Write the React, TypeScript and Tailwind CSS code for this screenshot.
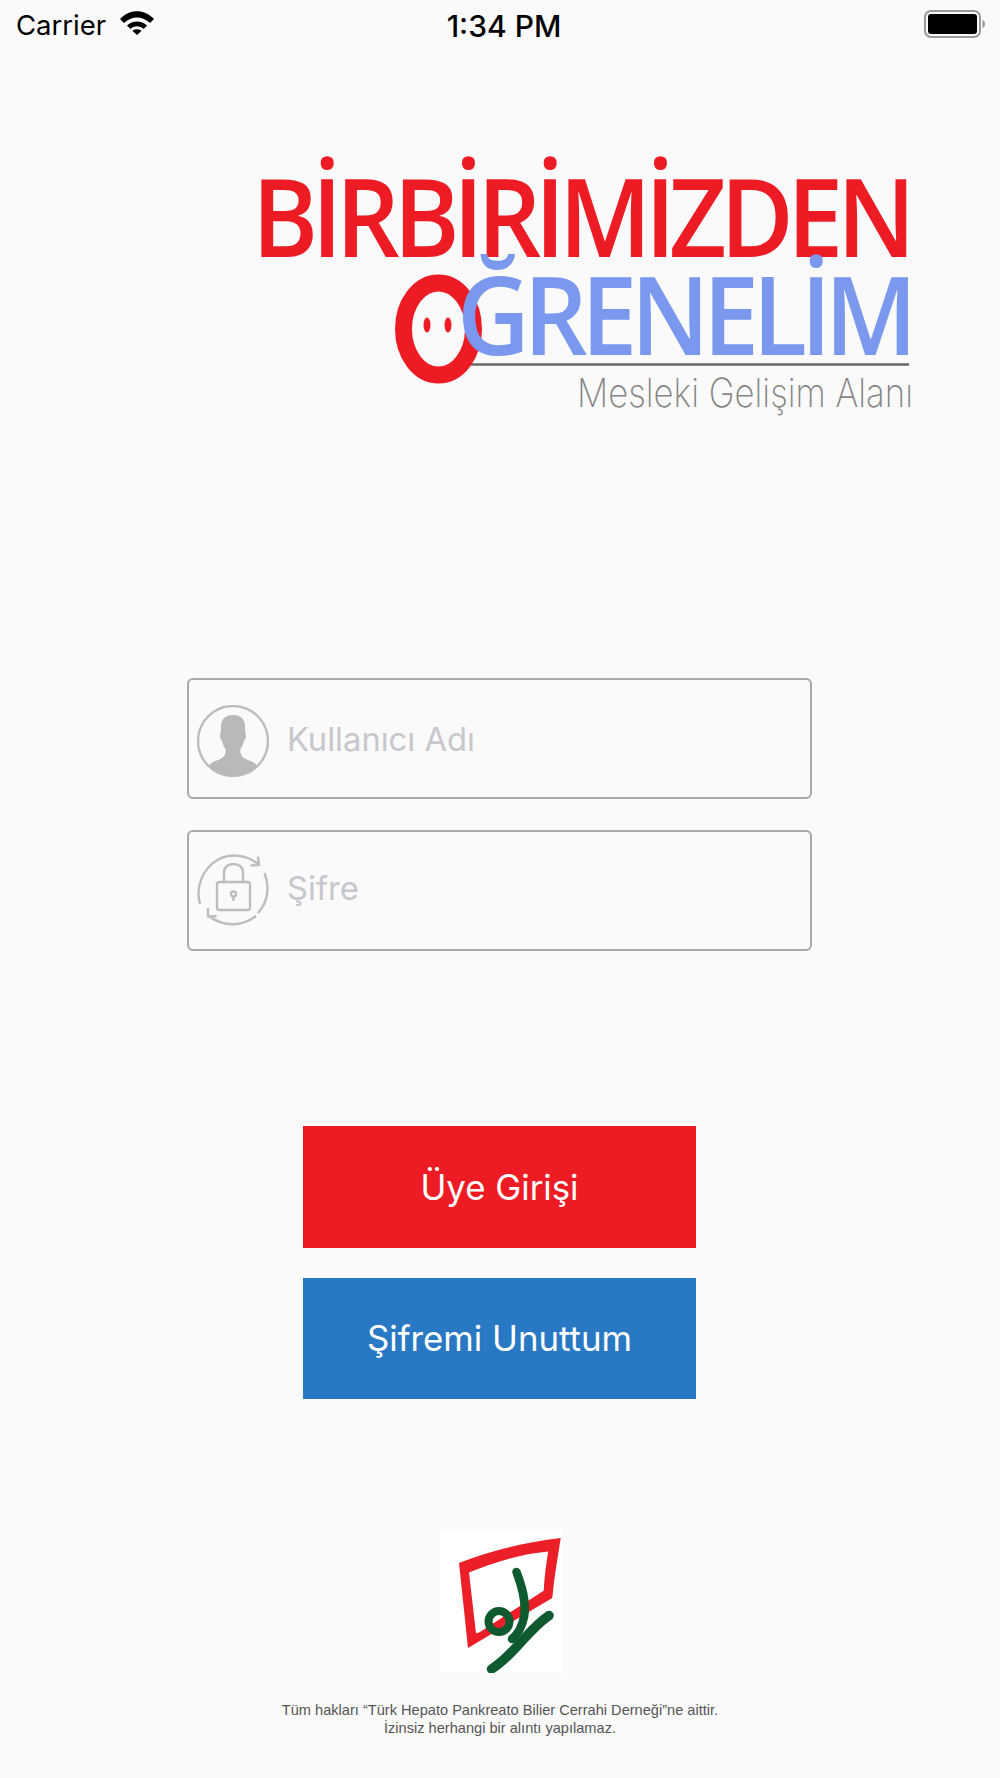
import React from 'react';

function WifiIcon() {
  return (
    <svg width="34" height="24" viewBox="0 0 34 24" className="mb-[6px] ml-[14px]">
      <path d="M0 8C9.5 -2.5 24.5 -2.5 34 8L30 12C22.5 4.5 11.5 4.5 4 12Z" fill="#000" />
      <path d="M7 14.6C12.6 9.2 21.4 9.2 27 14.6L23.6 18C19.6 14.4 14.4 14.4 10.4 18Z" fill="#000" />
      <path d="M12.4 19.8C15 17.8 19 17.8 21.6 19.8L17 24Z" fill="#000" />
    </svg>
  );
}

function BatteryIcon() {
  return (
    <svg width="61" height="28" viewBox="0 0 61 28">
      <rect x="1" y="1" width="55" height="26" rx="6" fill="none" stroke="#9a9a9a" strokeWidth="2" />
      <rect x="4" y="4" width="49" height="20" rx="3" fill="#000" />
      <path d="M58.5 10C60 10.5 61 12 61 14C61 16 60 17.5 58.5 18Z" fill="#9a9a9a" />
    </svg>
  );
}

function StatusBar() {
  return (
    <div className="relative flex h-[50px] items-center pl-[16px] pr-[15px] pt-[1px] font-['Inter',sans-serif] text-[27.5px] text-black">
      <span className="mt-[1px]">Carrier</span>
      <WifiIcon />
      <span className="absolute left-0 right-0 mt-[1px] pl-[8px] text-center text-[30px] font-medium">1:34 PM</span>
      <div className="mb-[4px] ml-auto">
        <BatteryIcon />
      </div>
    </div>
  );
}

function Logo() {
  return (
    <svg width="690" height="310" viewBox="250 130 690 310" className="ml-[250px] mt-[80px] shrink-0">
      <text
        x="252"
        y="257"
        textLength="657"
        lengthAdjust="spacingAndGlyphs"
        letterSpacing="-7"
        fontFamily="'Open Sans', sans-serif"
        fontWeight="600"
        fontSize="108"
        fill="#ed1c24"
      >
        BİRBİRİMİZDEN
      </text>
      <line x1="470" y1="364.5" x2="909" y2="364.5" stroke="#666" strokeWidth="2.5" />
      <ellipse cx="438.5" cy="329" rx="35" ry="46" fill="none" stroke="#ed1c24" strokeWidth="17" />
      <ellipse cx="427" cy="325" rx="3.5" ry="7.5" fill="#ed1c24" />
      <ellipse cx="448" cy="325" rx="3.5" ry="7.5" fill="#ed1c24" />
      <text
        x="457"
        y="355"
        textLength="454"
        lengthAdjust="spacingAndGlyphs"
        letterSpacing="-7"
        fontFamily="'Open Sans', sans-serif"
        fontWeight="600"
        fontSize="108"
        fill="#7a99ee"
      >
        ĞRENELİM
      </text>
      <text
        x="577"
        y="407"
        textLength="336"
        lengthAdjust="spacingAndGlyphs"
        fontFamily="Inter, sans-serif"
        fontWeight="200"
        fontSize="40"
        fill="#858585"
      >
        Mesleki Gelişim Alanı
      </text>
    </svg>
  );
}

function UserIcon() {
  return (
    <svg width="72" height="72" viewBox="0 0 72 72" className="mt-[5px] shrink-0">
      <defs>
        <clipPath id="user-clip">
          <circle cx="36" cy="36" r="35" />
        </clipPath>
      </defs>
      <circle cx="36" cy="36" r="35" fill="none" stroke="#bdbdbd" strokeWidth="2.4" />
      <path
        clipPath="url(#user-clip)"
        d="M36 10C28 10 24 14 24 22C24 25 23.5 28 23 31C23 33 24 35 25 36C26 40 27 42 28.5 44C29 48 28 51 25 53C21 56 14 56 11 62L20 72H52L61 62C58 56 51 56 47 53C44 51 43 48 43.5 44C45 42 46 40 47 36C48 35 49 33 49 31C48.5 28 48 25 48 22C48 14 44 10 36 10Z"
        fill="#b9b9b9"
      />
    </svg>
  );
}

function LockIcon() {
  return (
    <svg width="72" height="72" viewBox="0 0 72 72" fill="none" stroke="#bdbdbd" strokeWidth="2.4" className="mb-[2px] shrink-0">
      <path d="M3 50C-2 32 6 14 22 5C35 -1 50 1 61 10" />
      <path d="M61 2.5L62 11L53.5 11.5" />
      <path d="M67.5 19C73 33 71 48 61 59" />
      <path d="M59 62C45 73 26 73 12 62" />
      <path d="M11 54L11 62.5L19.5 62" />
      <rect x="20" y="28" width="33" height="28" rx="2.5" />
      <path d="M27 28V19C27 13 31 10 36.5 10C42 10 46 13 46 19V28" />
      <circle cx="36.5" cy="40" r="2.5" />
      <path d="M36.5 42.5V47" />
    </svg>
  );
}

function TextRow({
  icon,
  placeholder,
  type,
  inputClass,
}: {
  icon: React.ReactNode;
  placeholder: string;
  type: string;
  inputClass: string;
}) {
  return (
    <label className="flex h-[121px] items-center rounded-[6px] border-2 border-[#a8a8a8] pl-[8px] pr-3">
      {icon}
      <input
        type={type}
        placeholder={placeholder}
        className={`ml-[18px] w-full bg-transparent font-['Inter',sans-serif] text-[32.7px] text-[#333] outline-none placeholder:text-[#c7c7cd] ${inputClass}`}
      />
    </label>
  );
}

function HepatoLogo() {
  return (
    <div className="ml-[2px] mt-[130px] h-[144px] w-[122px] bg-white">
      <svg width="122" height="144" viewBox="0 0 122 144">
        <path
          fillRule="evenodd"
          d="M19 34C50 22 85 13 120.7 9C118 28 114 48 112.3 69L28 119ZM29 43.5L36 104.5C38 104 40 103 41.5 102L103.7 61.7C104.5 48 106 35 108.3 22.5C81 25 55 33 29 43.5Z"
          fill="#ec1f28"
        />
        <g fill="none" stroke="#0e5a2e" strokeLinecap="round">
          <circle cx="59" cy="92.5" r="10.5" strokeWidth="8" />
          <path d="M76.5 43C81 55 87 72 84 88C82 98 78 105 72 110" strokeWidth="8.5" />
          <path d="M109 86.5C98 94 90 103 81 113C72 123 62 134 51.5 140" strokeWidth="9.5" />
        </g>
      </svg>
    </div>
  );
}

export default function App() {
  return (
    <div className="flex h-[1778px] w-[1000px] flex-col bg-[#fafafa]">
      <StatusBar />
      <Logo />
      <div className="ml-[187px] mt-[238px] flex w-[625px] flex-col gap-[31px]">
        <TextRow icon={<UserIcon />} placeholder="Kullanıcı Adı" type="text" inputClass="mt-[2px]" />
        <TextRow icon={<LockIcon />} placeholder="Şifre" type="password" inputClass="mb-[4px]" />
      </div>
      <div className="ml-[303px] mt-[175px] flex w-[393px] flex-col gap-[30px] font-['Inter',sans-serif] text-[34.8px] text-white">
        <button className="h-[122px] bg-[#ed1c24]">Üye Girişi</button>
        <button className="h-[121px] bg-[#2878c4]">Şifremi Unuttum</button>
      </div>
      <div className="flex flex-col items-center">
        <HepatoLogo />
        <p className="mt-[28px] text-center font-['Liberation_Sans',sans-serif] text-[14.6px] leading-[18px] text-[#555]">
          Tüm hakları “Türk Hepato Pankreato Bilier Cerrahi Derneği”ne aittir.
          <br />
          İzinsiz herhangi bir alıntı yapılamaz.
        </p>
      </div>
    </div>
  );
}
